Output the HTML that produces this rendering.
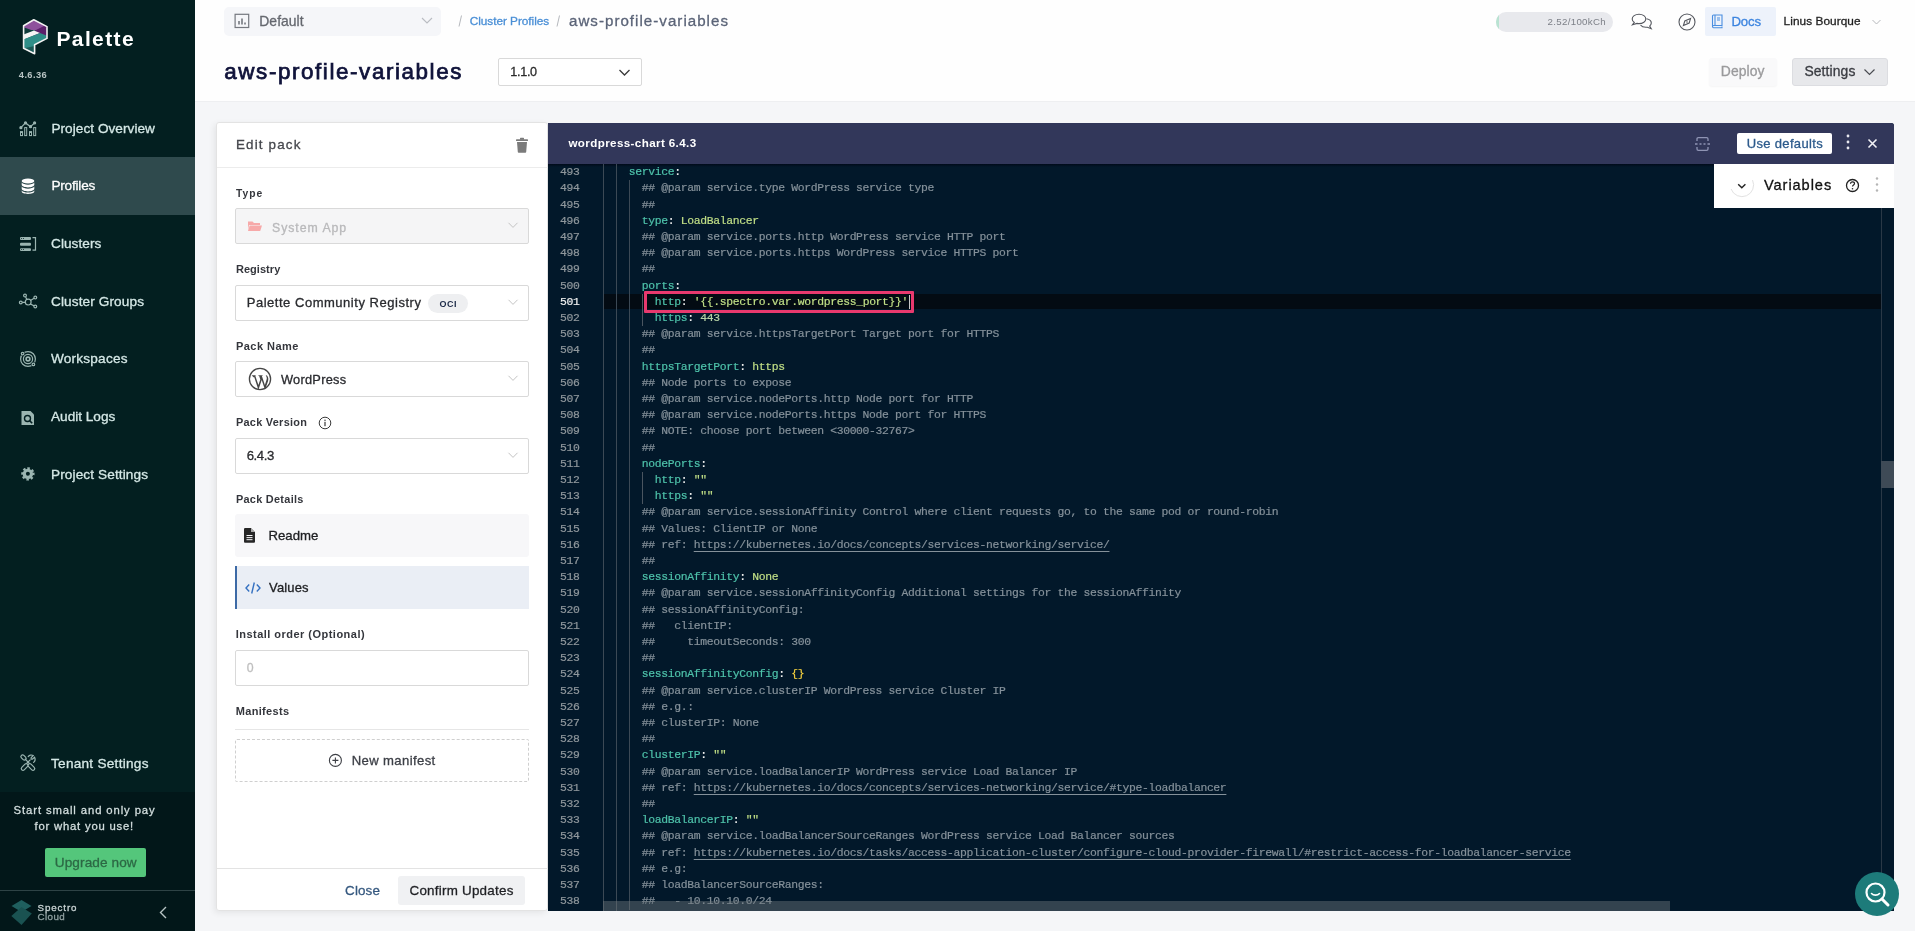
<!DOCTYPE html><html><head><meta charset="utf-8"><style>
*{margin:0;padding:0;box-sizing:border-box}
html,body{width:1915px;height:931px;overflow:hidden;background:#f5f6f8;font-family:"Liberation Sans",sans-serif}
.a{position:absolute}
.t{position:absolute;white-space:pre;line-height:1}
#side{position:absolute;left:0;top:0;width:195px;height:931px;background:#031f20}
#code{position:absolute;left:548px;top:123px;width:1346px;height:788px;background:#02182a;overflow:hidden;border-radius:0 3px 0 0}
.ln{position:absolute;left:0;width:31.5px;text-align:right;height:16.2px;line-height:16.2px;font-family:"Liberation Mono",monospace;font-size:11.4px;letter-spacing:-0.34px;color:#8f979c;-webkit-text-stroke:0.2px}
.cl{position:absolute;left:54.8px;height:16.2px;line-height:16.2px;white-space:pre;font-family:"Liberation Mono",monospace;font-size:11.4px;letter-spacing:-0.34px;color:#d4d4d4;-webkit-text-stroke:0.2px}
.k{color:#4ec2aa}.p{color:#f2f2f2}.v{color:#c1df86}.c{color:#85919a}.n{color:#b7d3a6}.y{color:#f4d03f}
.u{color:#85919a;text-decoration:underline;text-underline-offset:3px}
</style></head><body><div id="wrap" style="position:absolute;left:0;top:0;width:1915px;height:931px;will-change:transform">
<div class="a" style="left:195px;top:0;width:1720px;height:101px;background:#fefefe"></div>
<div class="a" style="left:195px;top:101px;width:1720px;height:1px;background:#eeeff1"></div>
<div class="a" style="left:224px;top:7px;width:217px;height:29px;background:#f5f6f9;border-radius:5px"></div>
<svg class="a" style="left:234px;top:13px" width="16" height="16" viewBox="0 0 16 16" fill="none" stroke="#75787f" stroke-width="1.2"><rect x="1.1" y="1.3" width="13.6" height="13.2"/><path d="M5,11.5 v-3.5 M8,11.5 v-6 M11,11.5 v-2" stroke-width="1.6"/></svg>
<span class="t" style="left:259.30px;top:15.00px;font-size:13.90px;letter-spacing:0.045px;font-weight:normal;color:#65686f;-webkit-text-stroke:0.3px #65686f;">Default</span>
<svg class="a" style="left:420px;top:16px" width="14" height="10" viewBox="0 0 14 10"><path d="M2,2 l5,5 l5,-5" fill="none" stroke="#b9bcc2" stroke-width="1.1"/></svg>
<svg class="a" style="left:455px;top:12px" width="110" height="18" viewBox="0 0 110 18" fill="none" stroke="#b5b8bd" stroke-width="1"><path d="M6.5,3.5 l-2.5,11"/><path d="M104.5,3.5 l-2.5,11"/></svg>
<span class="t" style="left:469.70px;top:16.00px;font-size:11.80px;letter-spacing:-0.034px;font-weight:normal;color:#4a8fd6;-webkit-text-stroke:0.3px #4a8fd6;">Cluster Profiles</span>
<span class="t" style="left:569.00px;top:13.00px;font-size:15.10px;letter-spacing:1.027px;font-weight:normal;color:#5b6478;-webkit-text-stroke:0.3px #5b6478;;font-weight:normal">aws-profile-variables</span>
<div class="a" style="left:1496px;top:12px;width:117px;height:20px;background:#e8e9ed;border-radius:10px;overflow:hidden"><div class="a" style="left:0;top:0;width:3px;height:20px;background:#b9e3d2"></div></div>
<span class="t" style="left:1547.60px;top:17.00px;font-size:9.70px;letter-spacing:0.310px;font-weight:normal;color:#7d8088;-webkit-text-stroke:0.3px #7d8088;-webkit-text-stroke:0">2.52/100kCh</span>
<svg class="a" style="left:1630px;top:12px" width="24" height="20" viewBox="0 0 24 20" fill="none" stroke="#55585f" stroke-width="1.1"><path d="M9,2.2 c-4,0 -6.8,2.2 -6.8,4.7 c0,1.4 0.8,2.6 2.1,3.5 l-1.8,2.3 l4.5,-1.3 c0.6,0.1 1.3,0.2 2,0.2 c4,0 6.8,-2.2 6.8,-4.7 s-2.8,-4.7 -6.8,-4.7 z"/><path d="M16.5,6.8 c2.8,0.5 4.8,2.3 4.8,4.3 c0,1.2 -0.6,2.2 -1.6,3 l1.5,2.6 l-3.8,-1.5 c-0.5,0.1 -1,0.1 -1.6,0.1 c-2.3,0 -4.3,-0.9 -5.3,-2.3"/></svg>
<svg class="a" style="left:1677px;top:12px" width="20" height="20" viewBox="0 0 20 20" fill="none" stroke="#55585f" stroke-width="1.1"><circle cx="10" cy="10" r="8"/><path d="M13.6,6.4 l-1.4,4.6 l-5.8,2.6 l1.4,-4.6 z"/><circle cx="10" cy="10" r="0.8" fill="#55585f" stroke="none"/></svg>
<div class="a" style="left:1705px;top:7px;width:71px;height:29px;background:#edf2fb;border-radius:2px"></div>
<svg class="a" style="left:1711px;top:14px" width="13" height="15" viewBox="0 0 13 15" fill="none" stroke="#4a8ee0" stroke-width="1.1"><path d="M1.5,12.5 v-10.5 c0,-0.6 0.4,-1 1,-1 h8.5 v10.5 h-8.4 c-0.6,0 -1.1,0.5 -1.1,1.1 c0,0.6 0.5,1.1 1.1,1.1 h8.4 v-1.2"/><path d="M4,1 v10.5 M6,4 h3 M6,6 h3"/></svg>
<span class="t" style="left:1731.40px;top:15.00px;font-size:13.20px;letter-spacing:-0.088px;font-weight:normal;color:#3c84df;-webkit-text-stroke:0.3px #3c84df;">Docs</span>
<span class="t" style="left:1783.60px;top:16.00px;font-size:11.80px;letter-spacing:0.066px;font-weight:normal;color:#1f1f1f;-webkit-text-stroke:0.3px #1f1f1f;">Linus Bourque</span>
<svg class="a" style="left:1871px;top:18px" width="11" height="8" viewBox="0 0 11 8"><path d="M1.5,2 l4,4 l4,-4" fill="none" stroke="#b7b9bd" stroke-width="1"/></svg>
<span class="t" style="left:224.30px;top:61.00px;font-size:22.40px;letter-spacing:1.590px;font-weight:normal;color:#10133a;-webkit-text-stroke:0.3px #10133a;-webkit-text-stroke:0.75px #10133a">aws-profile-variables</span>
<div class="a" style="left:498px;top:58px;width:144px;height:28px;background:#fff;border:1px solid #d9d9d9;border-radius:2px"></div>
<span class="t" style="left:510.30px;top:66.00px;font-size:12.60px;letter-spacing:-0.300px;font-weight:normal;color:#2b2b2b;-webkit-text-stroke:0.3px #2b2b2b;">1.1.0</span>
<svg class="a" style="left:617px;top:67px" width="15" height="11" viewBox="0 0 15 11"><path d="M2.5,3 l5,5 l5,-5" fill="none" stroke="#3a3a3a" stroke-width="1.3"/></svg>
<div class="a" style="left:1709px;top:58px;width:68px;height:28px;background:#f9f9fa;border-radius:3px;box-shadow:0 1px 2px rgba(0,0,0,.04)"></div>
<span class="t" style="left:1720.80px;top:65.00px;font-size:13.90px;letter-spacing:0.087px;font-weight:normal;color:#9a9a9c;-webkit-text-stroke:0.3px #9a9a9c;">Deploy</span>
<div class="a" style="left:1792px;top:58px;width:96px;height:28px;background:#e7e8eb;border:1px solid #dcdde1;border-radius:3px"></div>
<span class="t" style="left:1804.40px;top:65.00px;font-size:13.90px;letter-spacing:0.112px;font-weight:normal;color:#3a3c42;-webkit-text-stroke:0.3px #3a3c42;">Settings</span>
<svg class="a" style="left:1862px;top:66px" width="15" height="12" viewBox="0 0 15 12"><path d="M2.5,3.5 l5,5 l5,-5" fill="none" stroke="#4a4c52" stroke-width="1.2"/></svg>
<div id="side"></div>
<div class="a" style="left:0;top:157px;width:195px;height:58px;background:#2f4a4d"></div>
<div class="a" style="left:0;top:792px;width:195px;height:139px;background:#021719"></div>
<div class="a" style="left:0;top:890px;width:195px;height:1px;background:#2e4345"></div>
<svg class="a" style="left:0;top:0" width="195" height="60" viewBox="0 0 195 60"><defs><clipPath id="lg"><polygon points="33.8,19.8 47,26.6 47,38.4 34.6,44.8 34.6,53.8 23.6,48.2 23.6,25.8"/></clipPath></defs><g clip-path="url(#lg)"><rect x="20" y="15" width="30" height="45" fill="#1b5b58"/><polygon points="20,15 50,15 50,30 20,30" fill="#8e519c"/><polygon points="34,31 50,23 50,40 34,40" fill="#5b1f6a"/><polygon points="20,26 34,31 20,36" fill="#0e3b3a"/><polygon points="20,36 34,30.5 40,33 20,41" fill="#f4f4f4"/><polygon points="20,41 40,33 50,37 50,40 34.6,46 20,49" fill="#2f8e88"/></g><polygon points="33.8,19.8 47,26.6 47,38.4 34.6,44.8 34.6,53.8 23.6,48.2 23.6,25.8" fill="none" stroke="#f2f2f2" stroke-width="1.6" stroke-linejoin="round"/></svg>
<span class="t" style="left:56.40px;top:28.00px;font-size:21.00px;letter-spacing:1.403px;font-weight:bold;color:#ffffff;">Palette</span>
<span class="t" style="left:18.80px;top:71.00px;font-size:9.30px;letter-spacing:0.409px;font-weight:bold;color:#b8c4c4;">4.6.36</span>
<span class="t" style="left:51.40px;top:122.00px;font-size:13.60px;letter-spacing:0.052px;font-weight:normal;color:#d5e8e6;-webkit-text-stroke:0.3px #d5e8e6;">Project Overview</span>
<span class="t" style="left:51.40px;top:179.00px;font-size:13.60px;letter-spacing:-0.194px;font-weight:normal;color:#ffffff;-webkit-text-stroke:0.3px #ffffff;">Profiles</span>
<span class="t" style="left:51.00px;top:237.00px;font-size:13.60px;letter-spacing:0.075px;font-weight:normal;color:#d5e8e6;-webkit-text-stroke:0.3px #d5e8e6;">Clusters</span>
<span class="t" style="left:51.00px;top:295.00px;font-size:13.60px;letter-spacing:0.118px;font-weight:normal;color:#d5e8e6;-webkit-text-stroke:0.3px #d5e8e6;">Cluster Groups</span>
<span class="t" style="left:51.00px;top:352.00px;font-size:13.60px;letter-spacing:0.215px;font-weight:normal;color:#d5e8e6;-webkit-text-stroke:0.3px #d5e8e6;">Workspaces</span>
<span class="t" style="left:51.00px;top:410.00px;font-size:13.60px;letter-spacing:0.004px;font-weight:normal;color:#d5e8e6;-webkit-text-stroke:0.3px #d5e8e6;">Audit Logs</span>
<span class="t" style="left:51.00px;top:468.00px;font-size:13.60px;letter-spacing:0.118px;font-weight:normal;color:#d5e8e6;-webkit-text-stroke:0.3px #d5e8e6;">Project Settings</span>
<span class="t" style="left:51.00px;top:757.00px;font-size:13.60px;letter-spacing:0.266px;font-weight:normal;color:#d5e8e6;-webkit-text-stroke:0.3px #d5e8e6;">Tenant Settings</span>
<span class="t" style="left:13.60px;top:805.00px;font-size:11.30px;letter-spacing:0.891px;font-weight:normal;color:#d3dede;-webkit-text-stroke:0.3px #d3dede;">Start small and only pay</span>
<span class="t" style="left:34.50px;top:821.00px;font-size:11.30px;letter-spacing:0.791px;font-weight:normal;color:#d3dede;-webkit-text-stroke:0.3px #d3dede;">for what you use!</span>
<div class="a" style="left:45px;top:848px;width:101px;height:29px;background:#54c67b;border-radius:2px"></div>
<span class="t" style="left:54.80px;top:856.00px;font-size:13.60px;letter-spacing:0.095px;font-weight:normal;color:#2c6844;-webkit-text-stroke:0.3px #2c6844;">Upgrade now</span>
<span class="t" style="left:37.50px;top:903.00px;font-size:9.80px;letter-spacing:0.869px;font-weight:normal;color:#c9d3d3;-webkit-text-stroke:0.3px #c9d3d3;">Spectro</span>
<span class="t" style="left:37.50px;top:912.00px;font-size:9.80px;letter-spacing:0.424px;font-weight:normal;color:#8fa0a0;-webkit-text-stroke:0.3px #8fa0a0;">Cloud</span>
<svg class="a" style="left:0;top:0" width="195" height="931" viewBox="0 0 195 931" fill="none" stroke="#9bb5b1" stroke-width="1.2"><path d="M20.9,127.7 L25.5,122.9 L30.5,126.7 L34.6,122.9" /><circle cx="20.9" cy="127.7" r="1" fill="#9bb5b1"/><circle cx="25.5" cy="122.9" r="1" fill="#9bb5b1"/><circle cx="30.5" cy="126.7" r="1" fill="#9bb5b1"/><circle cx="34.6" cy="122.9" r="1" fill="#9bb5b1"/><g stroke-width="1"><rect x="20.5" y="131.6" width="2" height="4"/><rect x="24.7" y="127.6" width="2" height="8"/><rect x="29.5" y="131.6" width="2" height="4"/><rect x="33.7" y="127.6" width="2" height="8"/></g><g stroke="none" fill="#9bb5b1"><rect x="20" y="237" width="11" height="2.9" rx="1"/><rect x="20" y="242.7" width="11" height="3" rx="1"/><rect x="20" y="248.2" width="11" height="2.9" rx="1"/></g><g stroke="none" fill="#031f20"><circle cx="21.6" cy="238.4" r="0.5"/><circle cx="23.5" cy="238.4" r="0.5"/><circle cx="21.6" cy="249.6" r="0.5"/><circle cx="23.5" cy="249.6" r="0.5"/></g><path d="M32.5,237.6 h3 v12.6 h-3"/><circle cx="28.2" cy="302.1" r="2.9"/><circle cx="20.8" cy="302.5" r="1.4"/><circle cx="35.3" cy="297.6" r="1.4"/><circle cx="35.3" cy="306.5" r="1.4"/><circle cx="25" cy="295.6" r="1.4"/><path d="M22.2,302.4 h3.1 M30.5,300.4 l3.6,-2.1 M30.4,304 l3.8,1.9 M25.6,297 l1.3,2.4"/><circle cx="28" cy="359" r="7.4"/><circle cx="28" cy="359" r="4.6"/><circle cx="28" cy="359" r="1.9" stroke-width="1.6"/><circle cx="22.6" cy="353.6" r="2.4" fill="#031f20" stroke="none"/><circle cx="33.4" cy="364.4" r="2.4" fill="#031f20" stroke="none"/><circle cx="22.6" cy="353.6" r="1.3"/><circle cx="33.4" cy="364.4" r="1.3"/><path d="M21.5,411 h9 l3.5,3.5 v10.5 h-12.5 z" fill="#9bb5b1" stroke="none"/><circle cx="27.5" cy="418.5" r="3" stroke="#031f21" stroke-width="1.4"/><path d="M29.6,420.6 l2.6,2.6" stroke="#031f21" stroke-width="1.6"/><circle cx="27.9" cy="473.9" r="5.2" fill="#9bb5b1" stroke="none"/><circle cx="27.9" cy="473.9" r="5.6" fill="none" stroke="#9bb5b1" stroke-width="2.2" stroke-dasharray="2.4 1.998" transform="rotate(-12 27.9 473.9)"/><circle cx="27.9" cy="473.8" r="2" fill="#031f20" stroke="none"/><g transform="translate(14,748)" stroke-linecap="round"><path d="M9,20.6 L12.2,17.4 M15.8,17.4 L19,20.6 M8.6,8.6 L10.4,10.4" stroke="#9bb5b1" stroke-width="4.6"/><path d="M9,20.6 L12.2,17.4 M15.8,17.4 L19,20.6 M8.6,8.6 L10.4,10.4" stroke="#031f21" stroke-width="2.2"/><path d="M11.2,11.2 L15,15 M13,15 L16.2,11.8" stroke="#9bb5b1" stroke-width="1.2"/><path d="M14.2,8.6 C15.5,6.8 17.8,6.6 19.2,7.6 L17.2,9.6 C16.8,10.6 17.4,11.4 18.3,11.2 L20.6,9.2 C21.4,11 21,13.2 19.6,14.4" stroke="#9bb5b1" stroke-width="1.2"/></g></svg>
<svg class="a" style="left:21px;top:178px" width="14" height="16" viewBox="0 0 14 16"><ellipse cx="7" cy="3" rx="6.3" ry="2.6" fill="#fff"/><path d="M0.7,4.6 v2.2 c0,1.5 2.8,2.6 6.3,2.6 s6.3,-1.1 6.3,-2.6 v-2.2 c-1,1.3 -3.6,2.1 -6.3,2.1 s-5.3,-0.8 -6.3,-2.1z" fill="#fff"/><path d="M0.7,8.6 v2.2 c0,1.5 2.8,2.6 6.3,2.6 s6.3,-1.1 6.3,-2.6 v-2.2 c-1,1.3 -3.6,2.1 -6.3,2.1 s-5.3,-0.8 -6.3,-2.1z" fill="#fff"/><path d="M0.7,12.4 v1.2 c0,1.5 2.8,2.4 6.3,2.4 s6.3,-0.9 6.3,-2.4 v-1.2 c-1,1.3 -3.6,2.1 -6.3,2.1 s-5.3,-0.8 -6.3,-2.1z" fill="#fff"/></svg>
<svg class="a" style="left:0;top:890px" width="195" height="41" viewBox="0 0 195 41"><polygon points="21.5,10 31.5,16 21.5,22 11.5,16" fill="#1f5f5e"/><polygon points="21.5,17 31.8,23.5 21.5,35 11.3,26" fill="#1a5251"/><path d="M166,17 l-5.5,5.5 l5.5,5.5" fill="none" stroke="#b7c4c4" stroke-width="1.4"/></svg>
<div class="a" style="left:216px;top:122px;width:332px;height:789px;background:#fff;border:1px solid #e3e3e3;border-radius:3px;box-shadow:-2px 2px 6px rgba(0,0,0,.07)"></div>
<div id="code">
<div class="a" style="left:0;top:0;width:1346px;height:41px;background:#32375a"></div>
<div class="a" style="left:0;top:41px;width:1346px;height:3px;background:linear-gradient(#000a1a,rgba(2,24,42,0))"></div>
<div class="a" style="left:55px;top:170.6px;width:1278px;height:15.5px;background:#030b13"></div>
<div class="a" style="left:93.6px;top:171.2px;width:1px;height:31.4px;background:#4a5560"></div>
<div class="a" style="left:93.6px;top:349.4px;width:1px;height:31.4px;background:#4a5560"></div>
<div class="a" style="left:55px;top:41px;width:1px;height:747px;background:#3c4955"></div>
<div class="a" style="left:68.4px;top:41px;width:1px;height:747px;background:#3c4955"></div>
<div class="a" style="left:80.6px;top:57.4px;width:1px;height:730px;background:#3c4955"></div>
<div class="ln" style="top:41.20px">493</div>
<div class="cl" style="top:41.20px"><span class="k">    service</span><span class="p">:</span></div>
<div class="ln" style="top:57.40px">494</div>
<div class="cl" style="top:57.40px"><span class="c">      ## @param service.type WordPress service type</span></div>
<div class="ln" style="top:73.60px">495</div>
<div class="cl" style="top:73.60px"><span class="c">      ##</span></div>
<div class="ln" style="top:89.80px">496</div>
<div class="cl" style="top:89.80px"><span class="k">      type</span><span class="p">: </span><span class="v">LoadBalancer</span></div>
<div class="ln" style="top:106.00px">497</div>
<div class="cl" style="top:106.00px"><span class="c">      ## @param service.ports.http WordPress service HTTP port</span></div>
<div class="ln" style="top:122.20px">498</div>
<div class="cl" style="top:122.20px"><span class="c">      ## @param service.ports.https WordPress service HTTPS port</span></div>
<div class="ln" style="top:138.40px">499</div>
<div class="cl" style="top:138.40px"><span class="c">      ##</span></div>
<div class="ln" style="top:154.60px">500</div>
<div class="cl" style="top:154.60px"><span class="k">      ports</span><span class="p">:</span></div>
<div class="ln" style="top:170.80px;color:#f0f0f0">501</div>
<div class="cl" style="top:170.80px"><span class="k">        http</span><span class="p">: </span><span class="v">&#x27;{{.spectro.var.wordpress_port}}&#x27;</span></div>
<div class="ln" style="top:187.00px">502</div>
<div class="cl" style="top:187.00px"><span class="k">        https</span><span class="p">: </span><span class="n">443</span></div>
<div class="ln" style="top:203.20px">503</div>
<div class="cl" style="top:203.20px"><span class="c">      ## @param service.httpsTargetPort Target port for HTTPS</span></div>
<div class="ln" style="top:219.40px">504</div>
<div class="cl" style="top:219.40px"><span class="c">      ##</span></div>
<div class="ln" style="top:235.60px">505</div>
<div class="cl" style="top:235.60px"><span class="k">      httpsTargetPort</span><span class="p">: </span><span class="v">https</span></div>
<div class="ln" style="top:251.80px">506</div>
<div class="cl" style="top:251.80px"><span class="c">      ## Node ports to expose</span></div>
<div class="ln" style="top:268.00px">507</div>
<div class="cl" style="top:268.00px"><span class="c">      ## @param service.nodePorts.http Node port for HTTP</span></div>
<div class="ln" style="top:284.20px">508</div>
<div class="cl" style="top:284.20px"><span class="c">      ## @param service.nodePorts.https Node port for HTTPS</span></div>
<div class="ln" style="top:300.40px">509</div>
<div class="cl" style="top:300.40px"><span class="c">      ## NOTE: choose port between &lt;30000-32767&gt;</span></div>
<div class="ln" style="top:316.60px">510</div>
<div class="cl" style="top:316.60px"><span class="c">      ##</span></div>
<div class="ln" style="top:332.80px">511</div>
<div class="cl" style="top:332.80px"><span class="k">      nodePorts</span><span class="p">:</span></div>
<div class="ln" style="top:349.00px">512</div>
<div class="cl" style="top:349.00px"><span class="k">        http</span><span class="p">: </span><span class="v">&quot;&quot;</span></div>
<div class="ln" style="top:365.20px">513</div>
<div class="cl" style="top:365.20px"><span class="k">        https</span><span class="p">: </span><span class="v">&quot;&quot;</span></div>
<div class="ln" style="top:381.40px">514</div>
<div class="cl" style="top:381.40px"><span class="c">      ## @param service.sessionAffinity Control where client requests go, to the same pod or round-robin</span></div>
<div class="ln" style="top:397.60px">515</div>
<div class="cl" style="top:397.60px"><span class="c">      ## Values: ClientIP or None</span></div>
<div class="ln" style="top:413.80px">516</div>
<div class="cl" style="top:413.80px"><span class="c">      ## ref: </span><span class="u">https://kubernetes.io/docs/concepts/services-networking/service/</span></div>
<div class="ln" style="top:430.00px">517</div>
<div class="cl" style="top:430.00px"><span class="c">      ##</span></div>
<div class="ln" style="top:446.20px">518</div>
<div class="cl" style="top:446.20px"><span class="k">      sessionAffinity</span><span class="p">: </span><span class="v">None</span></div>
<div class="ln" style="top:462.40px">519</div>
<div class="cl" style="top:462.40px"><span class="c">      ## @param service.sessionAffinityConfig Additional settings for the sessionAffinity</span></div>
<div class="ln" style="top:478.60px">520</div>
<div class="cl" style="top:478.60px"><span class="c">      ## sessionAffinityConfig:</span></div>
<div class="ln" style="top:494.80px">521</div>
<div class="cl" style="top:494.80px"><span class="c">      ##   clientIP:</span></div>
<div class="ln" style="top:511.00px">522</div>
<div class="cl" style="top:511.00px"><span class="c">      ##     timeoutSeconds: 300</span></div>
<div class="ln" style="top:527.20px">523</div>
<div class="cl" style="top:527.20px"><span class="c">      ##</span></div>
<div class="ln" style="top:543.40px">524</div>
<div class="cl" style="top:543.40px"><span class="k">      sessionAffinityConfig</span><span class="p">: </span><span class="y">{}</span></div>
<div class="ln" style="top:559.60px">525</div>
<div class="cl" style="top:559.60px"><span class="c">      ## @param service.clusterIP WordPress service Cluster IP</span></div>
<div class="ln" style="top:575.80px">526</div>
<div class="cl" style="top:575.80px"><span class="c">      ## e.g.:</span></div>
<div class="ln" style="top:592.00px">527</div>
<div class="cl" style="top:592.00px"><span class="c">      ## clusterIP: None</span></div>
<div class="ln" style="top:608.20px">528</div>
<div class="cl" style="top:608.20px"><span class="c">      ##</span></div>
<div class="ln" style="top:624.40px">529</div>
<div class="cl" style="top:624.40px"><span class="k">      clusterIP</span><span class="p">: </span><span class="v">&quot;&quot;</span></div>
<div class="ln" style="top:640.60px">530</div>
<div class="cl" style="top:640.60px"><span class="c">      ## @param service.loadBalancerIP WordPress service Load Balancer IP</span></div>
<div class="ln" style="top:656.80px">531</div>
<div class="cl" style="top:656.80px"><span class="c">      ## ref: </span><span class="u">https://kubernetes.io/docs/concepts/services-networking/service/#type-loadbalancer</span></div>
<div class="ln" style="top:673.00px">532</div>
<div class="cl" style="top:673.00px"><span class="c">      ##</span></div>
<div class="ln" style="top:689.20px">533</div>
<div class="cl" style="top:689.20px"><span class="k">      loadBalancerIP</span><span class="p">: </span><span class="v">&quot;&quot;</span></div>
<div class="ln" style="top:705.40px">534</div>
<div class="cl" style="top:705.40px"><span class="c">      ## @param service.loadBalancerSourceRanges WordPress service Load Balancer sources</span></div>
<div class="ln" style="top:721.60px">535</div>
<div class="cl" style="top:721.60px"><span class="c">      ## ref: </span><span class="u">https://kubernetes.io/docs/tasks/access-application-cluster/configure-cloud-provider-firewall/#restrict-access-for-loadbalancer-service</span></div>
<div class="ln" style="top:737.80px">536</div>
<div class="cl" style="top:737.80px"><span class="c">      ## e.g:</span></div>
<div class="ln" style="top:754.00px">537</div>
<div class="cl" style="top:754.00px"><span class="c">      ## loadBalancerSourceRanges:</span></div>
<div class="ln" style="top:770.20px">538</div>
<div class="cl" style="top:770.20px"><span class="c">      ##   - 10.10.10.0/24</span></div>
<div class="a" style="left:96.1px;top:168.1px;width:270.4px;height:21.7px;border:3px solid #e8396e;border-radius:1px"></div>
<div class="a" style="left:360.7px;top:172px;width:1px;height:14px;background:#c8c8c8"></div>
<div class="a" style="left:1332.8px;top:84px;width:1px;height:704px;background:#2a3846"></div>
<div class="a" style="left:1333px;top:338px;width:13px;height:27px;background:#3e4a56"></div>
<div class="a" style="left:55px;top:778px;width:1067px;height:10px;background:rgba(110,120,125,0.45)"></div>
</div>
<span class="t" style="left:236.00px;top:138.00px;font-size:13.40px;letter-spacing:1.157px;font-weight:normal;color:#45474d;-webkit-text-stroke:0.3px #45474d;">Edit pack</span>
<svg class="a" style="left:515px;top:137px" width="14" height="16" viewBox="0 0 14 16" fill="#7b7b7b"><rect x="1" y="2.3" width="12" height="1.8" rx="0.6"/><rect x="5" y="0.8" width="4" height="2" rx="0.6"/><path d="M2,5 h10 l-0.8,10 c0,0.4 -0.4,0.7 -0.8,0.7 h-6.8 c-0.4,0 -0.8,-0.3 -0.8,-0.7 z"/></svg>
<div class="a" style="left:217px;top:167px;width:330px;height:1px;background:#ececec"></div>
<span class="t" style="left:236.00px;top:189.00px;font-size:10.30px;letter-spacing:0.974px;font-weight:bold;color:#34363c;">Type</span>
<div class="a" style="left:235px;top:208px;width:294px;height:36px;background:#f5f5f6;border:1px solid #d9d9d9;border-radius:2px"></div>
<svg class="a" style="left:247px;top:220px" width="16" height="12" viewBox="0 0 16 12" fill="#f7a9a9"><path d="M1,1.5 h4.5 l1.5,1.5 h6 v2 h-11 l-1,5 z"/><path d="M2.6,5.6 h12.4 l-1.8,5.4 h-12.2 z"/></svg>
<span class="t" style="left:272.00px;top:222.00px;font-size:12.30px;letter-spacing:0.953px;font-weight:normal;color:#b9b9bb;-webkit-text-stroke:0.3px #b9b9bb;">System App</span>
<svg class="a" style="left:507px;top:221px" width="12" height="9" viewBox="0 0 12 9"><path d="M1.5,1.8 l4.5,4.6 l4.5,-4.6" fill="none" stroke="#c4c4c4" stroke-width="1"/></svg>
<span class="t" style="left:235.90px;top:264.00px;font-size:11.00px;letter-spacing:0.053px;font-weight:bold;color:#34363c;">Registry</span>
<div class="a" style="left:235px;top:285px;width:294px;height:36px;background:#fff;border:1px solid #d9d9d9;border-radius:2px"></div>
<span class="t" style="left:246.70px;top:296.00px;font-size:13.00px;letter-spacing:0.524px;font-weight:normal;color:#2a2b2f;-webkit-text-stroke:0.3px #2a2b2f;">Palette Community Registry</span>
<div class="a" style="left:428px;top:294px;width:40px;height:19px;background:#eeeff1;border-radius:10px"></div>
<span class="t" style="left:439.50px;top:300.00px;font-size:9.00px;letter-spacing:0.501px;font-weight:bold;color:#1d2a48;">OCI</span>
<svg class="a" style="left:507px;top:298px" width="12" height="9" viewBox="0 0 12 9"><path d="M1.5,1.8 l4.5,4.6 l4.5,-4.6" fill="none" stroke="#c4c4c4" stroke-width="1"/></svg>
<span class="t" style="left:235.90px;top:341.00px;font-size:11.00px;letter-spacing:0.486px;font-weight:bold;color:#34363c;">Pack Name</span>
<div class="a" style="left:235px;top:361px;width:294px;height:36px;background:#fff;border:1px solid #d9d9d9;border-radius:2px"></div>
<svg class="a" style="left:248px;top:367px" width="24" height="24" viewBox="0 0 24 24"><circle cx="12" cy="12" r="10.6" fill="none" stroke="#464646" stroke-width="1.3"/><path d="M3.6,8.2 h4.6 l-0.9,0.5 l3.1,9.3 l1.9,-5.6 l-1.2,-3.7 h-0.9 v-0.5 h4.6 v0.5 h-1 l3.1,9.2 l1.7,-5.3 c0.6,-1.9 -0.2,-3.3 -0.9,-4.4 l1.3,0.4 c1.6,1.9 1.6,4.1 0.9,6 l-2.7,7.6 l-0.4,0 l-3.1,-9.2 l-3.1,9.2 l-0.4,0 l-3.9,-12 l-0.8,-0 z" fill="#464646"/></svg>
<span class="t" style="left:280.90px;top:374.00px;font-size:12.80px;letter-spacing:0.279px;font-weight:normal;color:#2a2b2f;-webkit-text-stroke:0.3px #2a2b2f;">WordPress</span>
<svg class="a" style="left:507px;top:374px" width="12" height="9" viewBox="0 0 12 9"><path d="M1.5,1.8 l4.5,4.6 l4.5,-4.6" fill="none" stroke="#c4c4c4" stroke-width="1"/></svg>
<span class="t" style="left:235.90px;top:417.00px;font-size:10.90px;letter-spacing:0.293px;font-weight:bold;color:#34363c;">Pack Version</span>
<svg class="a" style="left:318px;top:416px" width="14" height="14" viewBox="0 0 14 14"><circle cx="7" cy="7" r="5.8" fill="none" stroke="#3a3a3a" stroke-width="1"/><rect x="6.4" y="5.8" width="1.2" height="4.4" fill="#3a3a3a"/><circle cx="7" cy="4.2" r="0.75" fill="#3a3a3a"/></svg>
<div class="a" style="left:235px;top:438px;width:294px;height:36px;background:#fff;border:1px solid #d9d9d9;border-radius:2px"></div>
<span class="t" style="left:246.70px;top:449.00px;font-size:13.20px;letter-spacing:-0.418px;font-weight:normal;color:#2a2b2f;-webkit-text-stroke:0.3px #2a2b2f;">6.4.3</span>
<svg class="a" style="left:507px;top:451px" width="12" height="9" viewBox="0 0 12 9"><path d="M1.5,1.8 l4.5,4.6 l4.5,-4.6" fill="none" stroke="#c4c4c4" stroke-width="1"/></svg>
<span class="t" style="left:235.90px;top:494.00px;font-size:10.90px;letter-spacing:0.297px;font-weight:bold;color:#34363c;">Pack Details</span>
<div class="a" style="left:235px;top:514px;width:294px;height:43px;background:#f7f7f9;border-radius:3px"></div>
<svg class="a" style="left:243px;top:527px" width="13" height="16" viewBox="0 0 13 16"><path d="M2,1 h6 l4,4 v9.4 c0,0.8 -0.5,1.3 -1.3,1.3 h-8.4 c-0.8,0 -1.3,-0.5 -1.3,-1.3 v-12 c0,-0.8 0.5,-1.4 1,-1.4 z" fill="#262626"/><path d="M8,1 v4 h4" fill="#fff" opacity="0.6"/><path d="M3.5,8.5 h6 M3.5,10.6 h6 M3.5,12.7 h6" stroke="#f7f7f9" stroke-width="1"/></svg>
<span class="t" style="left:268.50px;top:529.00px;font-size:13.20px;letter-spacing:0.001px;font-weight:normal;color:#202124;-webkit-text-stroke:0.3px #202124;">Readme</span>
<div class="a" style="left:235px;top:566px;width:294px;height:43px;background:#eaeef5"></div>
<div class="a" style="left:235px;top:566px;width:1.6px;height:43px;background:#3d6aa6"></div>
<svg class="a" style="left:245px;top:581px" width="16" height="14" viewBox="0 0 16 14" fill="none" stroke="#3571c1" stroke-width="1.4"><path d="M4.2,3.5 l-3.2,3.5 l3.2,3.5 M11.8,3.5 l3.2,3.5 l-3.2,3.5 M9.3,1.5 l-2.6,11"/></svg>
<span class="t" style="left:269.10px;top:581.00px;font-size:13.00px;letter-spacing:0.125px;font-weight:normal;color:#202124;-webkit-text-stroke:0.3px #202124;">Values</span>
<span class="t" style="left:235.70px;top:629.00px;font-size:11.00px;letter-spacing:0.476px;font-weight:bold;color:#34363c;">Install order (Optional)</span>
<div class="a" style="left:235px;top:650px;width:294px;height:36px;background:#fff;border:1px solid #d9d9d9;border-radius:2px"></div>
<span class="t" style="left:246.80px;top:662.00px;font-size:12.30px;letter-spacing:0.000px;font-weight:normal;color:#bfbfbf;-webkit-text-stroke:0.3px #bfbfbf;">0</span>
<span class="t" style="left:235.70px;top:706.00px;font-size:11.00px;letter-spacing:0.333px;font-weight:bold;color:#34363c;">Manifests</span>
<div class="a" style="left:235px;top:729px;width:294px;height:1px;background:#e6e6e6"></div>
<div class="a" style="left:235px;top:739px;width:294px;height:43px;border:1px dashed #cfcfcf;border-radius:2px"></div>
<svg class="a" style="left:328px;top:753px" width="15" height="15" viewBox="0 0 15 15" fill="none" stroke="#3d3f45" stroke-width="1.1"><circle cx="7.4" cy="7.4" r="6"/><path d="M7.4,4.4 v6 M4.4,7.4 h6"/></svg>
<span class="t" style="left:351.70px;top:754.00px;font-size:13.10px;letter-spacing:0.386px;font-weight:normal;color:#3c3f46;-webkit-text-stroke:0.3px #3c3f46;">New manifest</span>
<div class="a" style="left:217px;top:868px;width:330px;height:1px;background:#e3e3e3"></div>
<span class="t" style="left:345.10px;top:884.00px;font-size:13.40px;letter-spacing:0.132px;font-weight:normal;color:#35587f;-webkit-text-stroke:0.3px #35587f;">Close</span>
<div class="a" style="left:398px;top:876px;width:127px;height:29px;background:#f0f1f3;border-radius:3px"></div>
<span class="t" style="left:409.50px;top:884.00px;font-size:13.40px;letter-spacing:0.240px;font-weight:normal;color:#1f2024;-webkit-text-stroke:0.3px #1f2024;">Confirm Updates</span>
<span class="t" style="left:568.46px;top:137.00px;font-size:11.60px;letter-spacing:0.391px;font-weight:bold;color:#ffffff;">wordpress-chart 6.4.3</span>
<svg class="a" style="left:1694px;top:136px" width="17" height="16" viewBox="0 0 17 16" fill="none" stroke="#8f94b4" stroke-width="1.3"><path d="M3,5 v-2 c0,-0.8 0.5,-1.3 1.3,-1.3 h8.4 c0.8,0 1.3,0.5 1.3,1.3 v2 M3,11 v2 c0,0.8 0.5,1.3 1.3,1.3 h8.4 c0.8,0 1.3,-0.5 1.3,-1.3 v-2"/><path d="M1,8 h2.5 M5.5,8 h2 M9.5,8 h2 M13.5,8 h2.5"/></svg>
<div class="a" style="left:1737px;top:133px;width:95px;height:21px;background:#fff;border-radius:2px"></div>
<span class="t" style="left:1746.70px;top:137.00px;font-size:13.00px;letter-spacing:0.338px;font-weight:normal;color:#2d5b8c;-webkit-text-stroke:0.3px #2d5b8c;">Use defaults</span>
<svg class="a" style="left:1844px;top:133px" width="8" height="18" viewBox="0 0 8 18" fill="#e8e8f0"><circle cx="4" cy="3" r="1.4"/><circle cx="4" cy="9" r="1.4"/><circle cx="4" cy="15" r="1.4"/></svg>
<svg class="a" style="left:1866px;top:137px" width="13" height="13" viewBox="0 0 13 13"><path d="M2.5,2.5 l8,8 M10.5,2.5 l-8,8" stroke="#f2f2f6" stroke-width="1.6"/></svg>
<div class="a" style="left:1714px;top:164px;width:180px;height:44px;background:#fff"></div>
<svg class="a" style="left:1726px;top:170px" width="32" height="32" viewBox="0 0 32 32"><path d="M5.1,19 A11.6,11.6 0 1 0 26.5,10.1" fill="none" stroke="#e2e2e2" stroke-width="1"/><path d="M12.2,14.2 l3.6,3.6 l3.6,-3.6" fill="none" stroke="#222" stroke-width="1.4"/></svg>
<span class="t" style="left:1764.00px;top:178.00px;font-size:14.60px;letter-spacing:0.927px;font-weight:normal;color:#111111;-webkit-text-stroke:0.3px #111111;">Variables</span>
<svg class="a" style="left:1845px;top:178px" width="15" height="15" viewBox="0 0 15 15"><circle cx="7.5" cy="7.5" r="6" fill="none" stroke="#222" stroke-width="1.3"/><path d="M5.5,5.8 c0,-1.2 0.9,-2 2,-2 s2,0.8 2,1.8 c0,1.3 -2,1.5 -2,3" fill="none" stroke="#222" stroke-width="1.2"/><circle cx="7.5" cy="10.8" r="0.8" fill="#222"/></svg>
<svg class="a" style="left:1873px;top:176px" width="8" height="17" viewBox="0 0 8 17" fill="#b5b5b5"><circle cx="4" cy="2.5" r="1.2"/><circle cx="4" cy="8.5" r="1.2"/><circle cx="4" cy="14.5" r="1.2"/></svg>
<div class="a" style="left:1855px;top:872px;width:44px;height:44px;border-radius:22px;background:#1d7b7a"></div>
<svg class="a" style="left:1855px;top:872px" width="44" height="44" viewBox="0 0 44 44" fill="none" stroke="#fff" stroke-width="2.2"><circle cx="20.5" cy="20.5" r="9"/><path d="M27,27 l6,6" stroke-width="3" stroke-linecap="round"/><path d="M16.5,21.5 c2,2.2 6,2.2 8,0" stroke-width="1.6" stroke-linecap="round"/></svg>
</div></body></html>
